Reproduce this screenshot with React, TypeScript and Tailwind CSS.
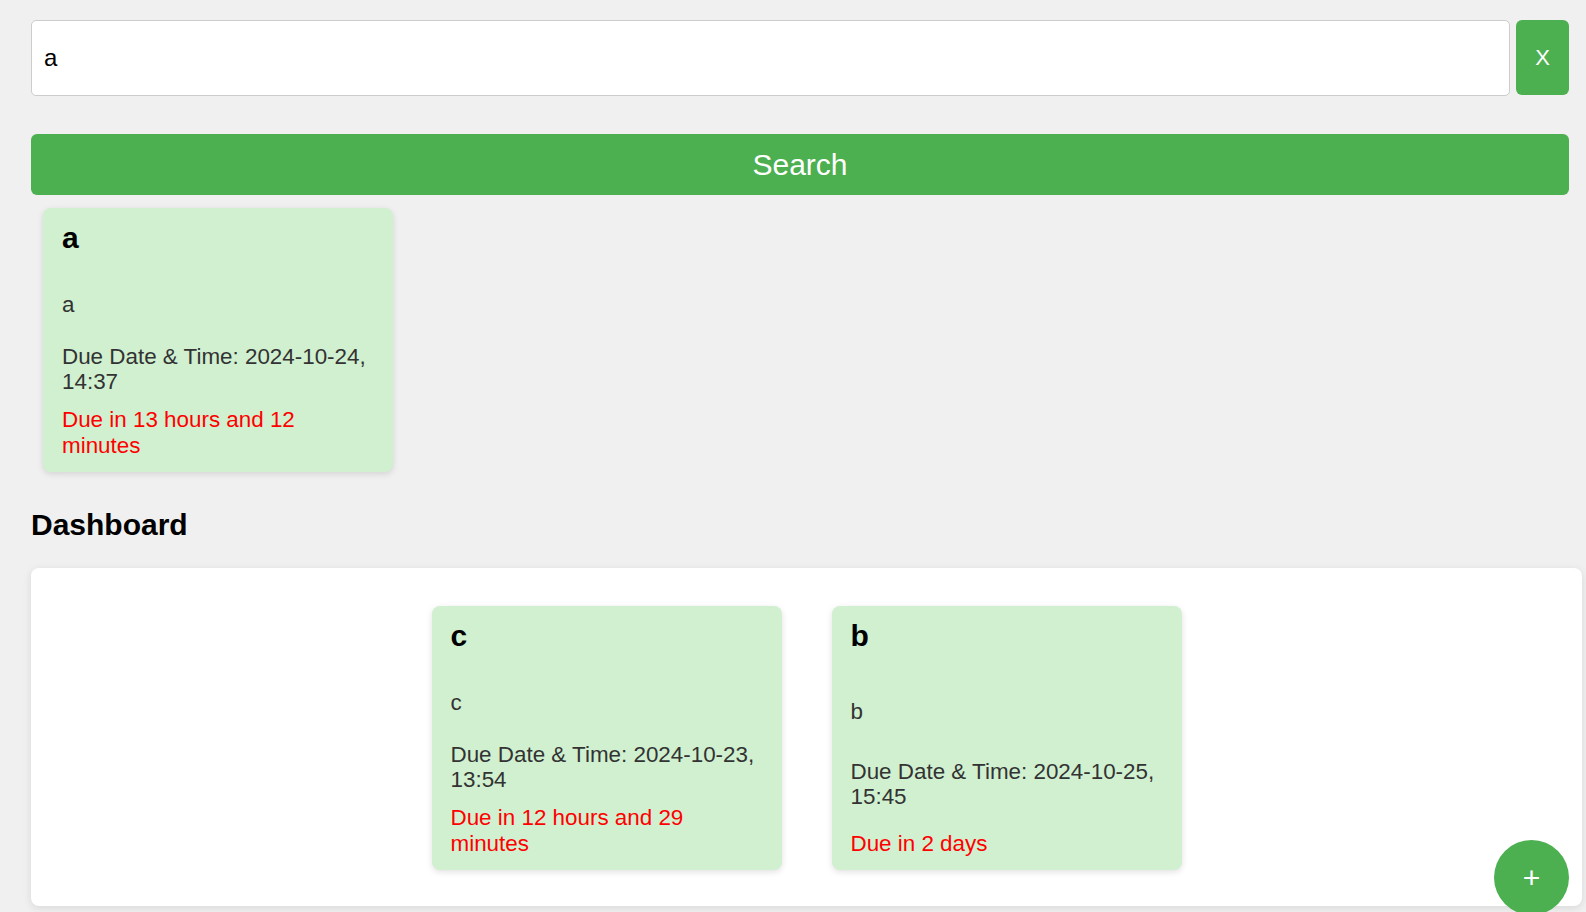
import React from "react";

type Task = {
  title: string;
  description: string;
  due: string;
  remaining: string;
};

const searchResults: Task[] = [
  {
    title: "a",
    description: "a",
    due: "2024-10-24, 14:37",
    remaining: "Due in 13 hours and 12 minutes",
  },
];

const dashboardTasks: Task[] = [
  {
    title: "c",
    description: "c",
    due: "2024-10-23, 13:54",
    remaining: "Due in 12 hours and 29 minutes",
  },
  {
    title: "b",
    description: "b",
    due: "2024-10-25, 15:45",
    remaining: "Due in 2 days",
  },
];

function TaskCard({ task }: { task: Task }) {
  return (
    <div className="flex h-[264px] w-[350px] flex-col justify-between rounded-[8px] bg-[#d0f0d0] px-[19px] pt-[13px] pb-[14px] shadow-[0_2px_6px_rgba(0,0,0,0.12)]">
      <h2 className="text-[30px] leading-[34px] font-bold text-black">{task.title}</h2>
      <p className="mt-[37px] text-[22.4px] leading-[25px] text-[#333]">{task.description}</p>
      <p className="mt-[26px] text-[22.4px] leading-[25.6px] text-[#333]">
        Due Date &amp; Time: {task.due}
      </p>
      <p className="mt-[12px] text-[22.4px] leading-[25.4px] text-[#ff0000]">{task.remaining}</p>
    </div>
  );
}

export default function App() {
  return (
    <div className="min-h-screen bg-[#f0f0f0] pt-[20px] pr-[4px] pl-[31px] font-['Liberation_Sans',Arial,sans-serif]">
      <div className="pr-[13px]">
        <div className="flex items-start gap-[6px]">
          <input
            type="text"
            defaultValue="a"
            className="h-[76px] flex-1 rounded-[5px] border border-[#ccc] bg-white pl-[12px] text-[24px] text-black outline-none"
          />
          <button className="flex h-[75px] w-[53px] items-center justify-center rounded-[6px] bg-[#4caf50] text-[22px] text-white">
            X
          </button>
        </div>

        <button className="mt-[38px] flex h-[61px] w-full items-center justify-center rounded-[6px] bg-[#4caf50] text-[30px] text-white">
          Search
        </button>
      </div>

      <div className="mt-[13px] ml-[12px] flex flex-wrap gap-[50px]">
        {searchResults.map((t) => (
          <TaskCard key={t.title} task={t} />
        ))}
      </div>

      <h2 className="mt-[35px] text-[30px] leading-[35px] font-bold text-black">Dashboard</h2>

      <div className="mt-[26px] flex flex-wrap justify-center gap-[50px] rounded-[8px] bg-white pt-[38px] pb-[36px] shadow-[0_2px_8px_rgba(0,0,0,0.1)]">
        {dashboardTasks.map((t) => (
          <TaskCard key={t.title} task={t} />
        ))}
      </div>

      <button className="fixed right-[17px] bottom-[-3px] flex h-[75px] w-[75px] items-center justify-center rounded-full bg-[#4caf50] text-[30px] leading-none text-white">
        +
      </button>
    </div>
  );
}
